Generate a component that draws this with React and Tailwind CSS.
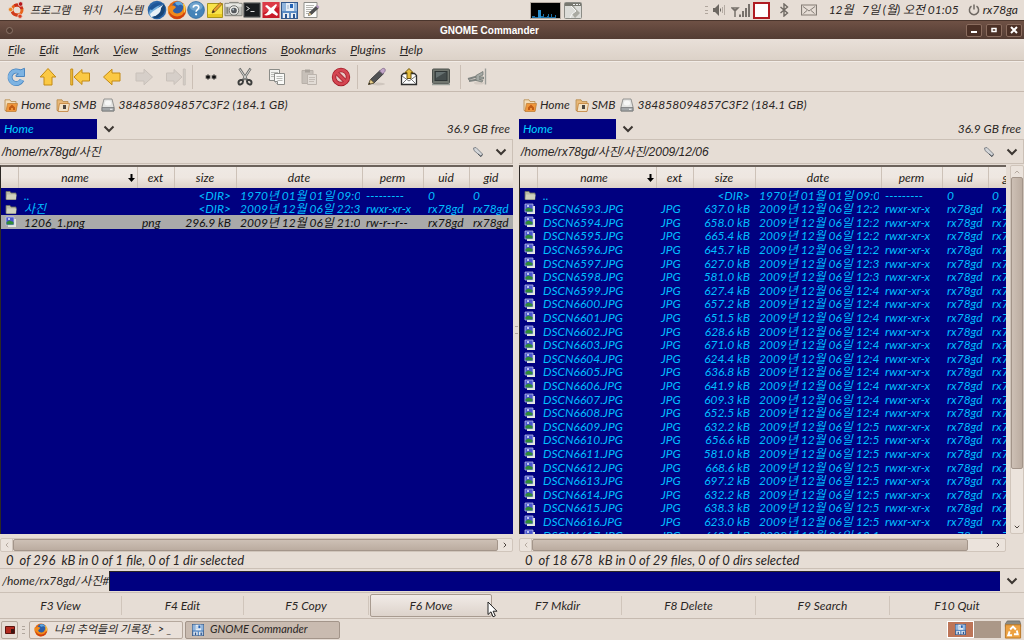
import React, { useState } from 'react';

const MENUS = ['File', 'Edit', 'Mark', 'View', 'Settings', 'Connections', 'Bookmarks', 'Plugins', 'Help'];

const LEFT_ROWS = [
  { name: '..', ext: '', size: '<DIR>', date: '1970년 01월 01일 09:00', perm: '---------', uid: '0', gid: '0', kind: 'dir' },
  { name: '사진', ext: '', size: '<DIR>', date: '2009년 12월 06일 22:38', perm: 'rwxr-xr-x', uid: 'rx78gd', gid: 'rx78gd', kind: 'dir' },
  { name: '1206_1.png', ext: 'png', size: '296.9 kB', date: '2009년 12월 06일 21:03', perm: 'rw-r--r--', uid: 'rx78gd', gid: 'rx78gd', kind: 'image', selected: true },
];

const PHOTOS = [
  ['6593', '637.0', '12:21'], ['6594', '658.0', '12:21'], ['6595', '665.4', '12:21'], ['6596', '645.7', '12:28'],
  ['6597', '627.0', '12:31'], ['6598', '581.0', '12:37'], ['6599', '627.4', '12:43'], ['6600', '657.2', '12:44'],
  ['6601', '651.5', '12:45'], ['6602', '628.6', '12:46'], ['6603', '671.0', '12:46'], ['6604', '624.4', '12:46'],
  ['6605', '636.8', '12:47'], ['6606', '641.9', '12:47'], ['6607', '609.3', '12:49'], ['6608', '652.5', '12:49'],
  ['6609', '632.2', '12:50'], ['6610', '656.6', '12:50'], ['6611', '581.0', '12:52'], ['6612', '668.6', '12:52'],
  ['6613', '697.2', '12:56'], ['6614', '632.2', '12:56'], ['6615', '638.3', '12:59'], ['6616', '623.0', '12:59'],
  ['6617', '663.1', '13:11'],
];

const RIGHT_ROWS = [
  LEFT_ROWS[0],
  ...PHOTOS.map(([no, size, time]) => ({
    name: `DSCN${no}.JPG`,
    ext: 'JPG',
    size: `${size} kB`,
    date: `2009년 12월 06일 ${time}`,
    perm: 'rwxr-xr-x',
    uid: 'rx78gd',
    gid: 'rx78gd',
    kind: 'image',
  })),
];

const ACTIONS = ['F3 View', 'F4 Edit', 'F5 Copy', 'F6 Move', 'F7 Mkdir', 'F8 Delete', 'F9 Search', 'F10 Quit'];

/* ---------- icons ---------- */

function Ubuntu() {
  return (
    <svg viewBox="0 0 18 18" className="size-[18px]">
      <circle cx="9" cy="9" r="5" fill="none" stroke="#e8641c" strokeWidth="3" />
      <path d="M13.9 8a5 5 0 0 0-7.4-3.3" fill="none" stroke="#c92d1c" strokeWidth="3" />
      <path d="M4.2 10.5a5 5 0 0 0 5.6 3.5" fill="none" stroke="#d13a1c" strokeWidth="3" />
      <circle cx="2.6" cy="8.5" r="2.2" fill="#ee8420" stroke="#e6ddd5" strokeWidth=".8" />
      <circle cx="12.6" cy="3" r="2.3" fill="#b5161c" stroke="#e6ddd5" strokeWidth=".8" />
      <circle cx="12" cy="15.2" r="2.2" fill="#dc3b1d" stroke="#e6ddd5" strokeWidth=".8" />
    </svg>
  );
}

function Thunderbird() {
  return (
    <svg viewBox="0 0 20 20" className="size-5">
      <circle cx="10" cy="10" r="9.3" fill="#2c67a8" />
      <path d="M2 13C4 5 11 1 18 4c-5 0-7 3-8 7l-4 7C3 17 2 15 2 13z" fill="#75b0de" />
      <path d="M3 14C7 10 11 8 16 5l-2 7-5 4-5 1z" fill="#e9f1f6" />
      <path d="M17 4c2 5 1 10-4 13-3 2-6 1-8 0 5-1 9-4 9-9z" fill="#174475" />
      <path d="M2 9C5 3 12 1 17 4c-5 1-9 3-12 6z" fill="#1e5698" />
    </svg>
  );
}

function Firefox({ className = 'size-[19px]' }) {
  return (
    <svg viewBox="0 0 20 20" className={className}>
      <circle cx="10" cy="10" r="9.2" fill="#e56a14" />
      <circle cx="11" cy="8" r="6.4" fill="#2d5ea7" />
      <path d="M8 2.4c4-2 8 0 8.6 4-2-2-4-2-5-1-2 0-3-1-3.6-3z" fill="#5fa6dd" />
      <path d="M1 6c1 1 2 1 3 0 2-1 4 0 5 1-1 2-3 2-3 4 1 3 6 3 8 1 2-2 3-5 2-8 4 5 3 12-3 14C6 21-.5 15 1 6z" fill="#f08a1c" />
      <path d="M2 11c2 5 8 7 13 4 2-2 3-4 3-7 2 7-3 11-8 11-5 0-8-4-8-8z" fill="#cf3f10" />
      <path d="M17 4c2 3 2 7 0 9 0-3 0-6-1-9z" fill="#fbd24a" />
    </svg>
  );
}

function HelpBubble() {
  return (
    <svg viewBox="0 0 18 18" className="size-[18px]">
      <circle cx="9" cy="9" r="8.4" fill="#4583b8" stroke="#2f6a9f" strokeWidth=".8" />
      <ellipse cx="9" cy="5.5" rx="6.5" ry="4.2" fill="#6fa3cd" />
      <path d="M6.2 6.6c.2-3.2 5.6-3.2 5.6 0 0 2-2.7 2-2.7 4.2" fill="none" stroke="#fff" strokeWidth="1.6" />
      <circle cx="9.1" cy="13.3" r="1.1" fill="#fff" />
    </svg>
  );
}

function Note() {
  return (
    <svg viewBox="0 0 18 18" className="size-[18px]">
      <path d="M1.5 2.5h15v14h-15z" fill="#f8e34a" stroke="#a8941c" />
      <path d="M2 13h14v3H2z" fill="#e9c922" />
      <path d="M6 12l1-3 7-7.5 2 1.8-7 7.5z" fill="#e89b2c" stroke="#7a5418" strokeWidth=".7" />
      <path d="M6 12l1-3 2 2z" fill="#3b2f22" />
    </svg>
  );
}

function Camera() {
  return (
    <svg viewBox="0 0 20 18" className="h-[18px] w-[19px]">
      <path d="M1 2h4l1-1h9l1 1h3v13H1z" fill="#c3c3bd" stroke="#7d7d77" />
      <path d="M1.5 2.5h17v3h-17z" fill="#e7e7e2" />
      <circle cx="10.5" cy="9.5" r="5" fill="#ecece8" stroke="#6c6c68" />
      <circle cx="10.5" cy="9.5" r="3" fill="#54575b" />
      <circle cx="9.7" cy="8.5" r="1" fill="#b4c6d2" />
      <rect x="2.5" y="6" width="2" height="7" fill="#85857f" />
    </svg>
  );
}

function Terminal() {
  return (
    <svg viewBox="0 0 18 16" className="h-4 w-[18px]">
      <rect x=".5" y=".5" width="17" height="15" rx="1" fill="#3a3c3e" stroke="#8c8c88" />
      <rect x="2" y="2" width="14" height="12" fill="#191c1f" />
      <path d="M3.5 4.5l3 2-3 2M7.5 9.5h4" fill="none" stroke="#dedede" />
    </svg>
  );
}

function RedX() {
  return (
    <svg viewBox="0 0 18 18" className="size-[18px]">
      <rect x=".5" y="1" width="17" height="16" fill="#c81a28" />
      <path d="M1 1h16v5L1 12z" fill="#dc3a46" />
      <path d="M2 14c2-1 4-3 5-5L3 5l2-1 4 3 5-4 1 1-3 5 4 4-1 2-5-3c-2 2-5 3-8 2z" fill="#fff" />
    </svg>
  );
}

function Floppy({ className = 'size-[17px]' }) {
  return (
    <svg viewBox="0 0 17 17" className={className}>
      <rect x=".5" y=".5" width="16" height="16" fill="#5b8cc4" stroke="#34588a" />
      <path d="M1 1h4v8H1zM13 1h3v8h-3z" fill="#8fb4dc" />
      <path d="M5 1h8v8H5z" fill="#e4ecf5" />
      <path d="M9 2h3v4H9z" fill="#2463b5" />
      <path d="M6 4h2M6 6h2" stroke="#9fb2c8" />
      <path d="M2 11h6v5H2zM10 11h5v5h-5z" fill="#e9edf2" />
      <path d="M4 12h2v4H4zM12 12h2v4h-2z" fill="#2b5590" />
    </svg>
  );
}

function TextEditor() {
  return (
    <svg viewBox="0 0 18 18" className="size-[18px]">
      <path d="M2 1.5h13v15H2z" fill="#fcfcfa" stroke="#8d8d88" />
      <path d="M4 4.5h8M4 6.5h7M4 8.5h6M4 10.5h4M4 12.5h3" stroke="#b5b5b0" />
      <path d="M6.5 14.5l1-3 7-6.5 2 2-7 6.5z" fill="#4e4f50" stroke="#2d2e2f" strokeWidth=".6" />
      <path d="M14 5.5l1.5-1.4 2 2L16 7.5z" fill="#b69ac0" />
      <path d="M6.5 14.5l1-3 2 2z" fill="#e3c788" />
    </svg>
  );
}

function LoadGraph() {
  return (
    <svg viewBox="0 0 31 17" className="h-[17px] w-[31px]">
      <rect x=".5" y=".5" width="30" height="16" fill="#000" stroke="#b5aaa1" />
      <path d="M2 16v-2h3v1h3V8h3v6h2v-2h1v3h3v-1h1v-2h1v3h2v-3h1v3h3v-2h1v3z" fill="#1b6ea5" />
      <path d="M8 16V8h3v8z" fill="#2b8fcd" />
    </svg>
  );
}

function BrokenWindow() {
  return (
    <svg viewBox="0 0 18 17" className="h-[17px] w-[18px]">
      <rect x=".5" y=".5" width="17" height="16" rx="1" fill="#dcdcd8" stroke="#8c8c86" />
      <path d="M1 1h16v3H1z" fill="#77776f" />
      <path d="M9 2h2v1H9zM12 2h2v1h-2zM15 2h1v1h-1z" fill="#eee" />
      <path d="M7 4l5 5-4 3 3 4 5-5-4-4-2-3z" fill="#aaaaa2" />
      <path d="M7 4l5 5-4 3-2 4" fill="none" stroke="#f6f6f4" />
    </svg>
  );
}

function Speaker() {
  return (
    <svg viewBox="0 0 14 14" className="size-[14px]" fill="#6d6862">
      <path d="M1 5h2l4-4v12L3 9H1z" />
      <path d="M10.5 4v6M12.5 2v10" stroke="#b4aba3" />
      <path d="M8.5 5.5v3" stroke="#6d6862" />
    </svg>
  );
}

function Signal() {
  return (
    <svg viewBox="0 0 20 16" className="h-4 w-5" stroke="#77716b">
      <path d="M1 6h6L4 9zM4 7v8" fill="none" strokeWidth="1.5" />
      <path d="M9 12.5v2.5M12 9v6M15 6v9M18 2v13" strokeWidth="2" />
    </svg>
  );
}

function Bluetooth() {
  return (
    <svg viewBox="0 0 10 14" className="h-[14px] w-[10px]" fill="none" stroke="#6f6963" strokeWidth="1.4">
      <path d="M1.5 4l7 6L5 13V1l3.5 3-7 6" />
    </svg>
  );
}

function Envelope() {
  return (
    <svg viewBox="0 0 16 12" className="h-3 w-4" fill="none" stroke="#837c75">
      <path d="M.5 1h15v10H.5z" strokeWidth="1.2" />
      <path d="M2 2.5l6 4.5 6-4.5M2.5 9.5l3.5-3M13.5 9.5L10 6.5" />
    </svg>
  );
}

function Power() {
  return (
    <svg viewBox="0 0 12 12" className="size-3" fill="none" stroke="#6f6963" strokeWidth="1.5">
      <path d="M3.5 2.2a4.6 4.6 0 1 0 5 0M6 .5v5" />
    </svg>
  );
}

function Refresh() {
  return (
    <svg viewBox="0 0 20 20" className="size-5">
      <path d="M14.5 5.5A6.3 6.3 0 1 0 16 13" fill="none" stroke="#4a86c0" strokeWidth="5" />
      <path d="M10 9.5V8l2.5-1-2-2.5 8-3.2v8.2z" fill="#7db3e2" stroke="#4a86c0" />
      <path d="M14.3 5.5A6.3 6.3 0 1 0 15.8 13" fill="none" stroke="#7db3e2" strokeWidth="3.6" />
    </svg>
  );
}

/* block arrow used by all of the navigation buttons */
function BlockArrow({ turn = '', bar = false, off = false }) {
  return (
    <svg viewBox="0 0 20 20" className={`size-5 ${turn}`}>
      <g fill={off ? '#d6cfc9' : '#fbc944'} stroke={off ? '#c9c1ba' : '#c48a12'} strokeLinejoin="round">
        <path d={bar ? 'M4 10l8-7.5V6h7.5v8H12v3.5z' : 'M1.5 10L10 2.2V6h8v8h-8v3.8z'} />
        {bar && <path d="M.8 2h1.9v16H.8z" />}
      </g>
    </svg>
  );
}

function Scissors() {
  return (
    <svg viewBox="0 0 20 20" className="size-5">
      <path d="M4.5 1.5L12 13M15.5 1.5L8 13" stroke="#6b6c6a" strokeWidth="2.4" />
      <path d="M4.8 2.2L11 11.5M15.2 2.2L9 11.5" stroke="#e5e6e3" strokeWidth=".9" />
      <path d="M3.5 15.5c0-3 4.5-3.5 4.5-1s-4.5 5-4.5 1zM16.5 15.5c0-3-4.5-3.5-4.5-1s4.5 5 4.5 1z" fill="none" stroke="#3c3d3c" strokeWidth="2" />
    </svg>
  );
}

function CopyIcon() {
  return (
    <svg viewBox="0 0 18 18" className="size-[18px]">
      <path d="M1.5 1.5h10v11h-10z" fill="#f2f2ef" stroke="#8b8c88" />
      <path d="M3 4.5h7M3 6.5h7M3 8.5h3" stroke="#b9bab6" />
      <path d="M6.5 5.5h10v11h-7l-3-3z" fill="#fafaf8" stroke="#8b8c88" />
      <path d="M8.5 8.5h6M8.5 10.5h6M9.5 12.5h5" stroke="#b9bab6" />
      <path d="M6.5 13.5h3v3" fill="#ddd" stroke="#8b8c88" />
    </svg>
  );
}

function PasteIcon() {
  return (
    <svg viewBox="0 0 18 18" className="size-[18px]">
      <path d="M2 2.5h11v13H2z" fill="#c7c0b9" stroke="#b8b0a9" />
      <path d="M5 1.5h5v3H5z" fill="#a9a29b" />
      <path d="M7.5 6.5h9v10h-9z" fill="#e2dcd6" stroke="#bcb4ad" />
      <path d="M9 9.5h6M9 11.5h6M9 13.5h5" stroke="#c4bcb5" />
    </svg>
  );
}

function Forbidden() {
  return (
    <svg viewBox="0 0 20 20" className="size-5">
      <circle cx="10" cy="10" r="7" fill="#e9c9c6" stroke="#a11c28" strokeWidth="4.4" />
      <path d="M5 5l10 10" stroke="#a11c28" strokeWidth="4.4" />
      <circle cx="10" cy="10" r="7" fill="none" stroke="#d44652" strokeWidth="2.8" />
      <path d="M5 5l10 10" stroke="#d44652" strokeWidth="2.8" />
    </svg>
  );
}

function Pencil() {
  return (
    <svg viewBox="0 0 20 20" className="size-5">
      <ellipse cx="11" cy="17" rx="7" ry="1.5" fill="#cfc6be" />
      <path d="M1.5 17.5l2-5 9.5-9 3.5 3.2-9.5 9.3z" fill="#515254" stroke="#2e2f30" strokeWidth=".8" />
      <path d="M12.5 4l3-2.5c2-.8 3.5.9 2.5 2.8L15.7 7z" fill="#c2a5c8" stroke="#7d6486" strokeWidth=".7" />
      <path d="M1.5 17.5l2-5 3.5 3.3z" fill="#e8ce8c" stroke="#6f5b2c" strokeWidth=".6" />
      <path d="M1.5 17.5l.8-2 1.3 1.2z" fill="#222" />
    </svg>
  );
}

function SendMail() {
  return (
    <svg viewBox="0 0 20 20" className="size-5">
      <path d="M2.5 8.5l2-2h11l2 2v9h-15z" fill="#fdfdfd" stroke="#2e2e2e" strokeWidth="1.3" />
      <path d="M3 17l5-5M17 17l-5-5M3 9l7 5 7-5" fill="none" stroke="#777" />
      <path d="M10 1.5l4 4h-2v6H8v-6H6z" fill="#e4bd3d" stroke="#6d5410" />
    </svg>
  );
}

function Monitor() {
  return (
    <svg viewBox="0 0 20 18" className="h-[18px] w-5">
      <rect x="1.5" y="1" width="17" height="14.5" rx="1" fill="#71766f" stroke="#4c504c" />
      <rect x="4" y="3.5" width="12" height="9" fill="#444c4c" stroke="#303636" />
      <path d="M5 4h10L5 10z" fill="#657070" />
      <path d="M1 16.5h18" stroke="#9a9f98" strokeWidth="1.5" />
    </svg>
  );
}

function Unplug() {
  return (
    <svg viewBox="0 0 20 20" className="size-5">
      <ellipse cx="12" cy="16" rx="5" ry="1.5" fill="#d5ccc4" />
      <path d="M1 12l9-2.5M2 14l9-1.5" stroke="#7f8380" strokeWidth="2" />
      <path d="M9 8.5l7-4v3.5l-4 2h4.5v2H12l4 1.5-1 1.5-6-1.5z" fill="#a4a8a4" stroke="#747874" strokeWidth=".8" />
      <path d="M18.5 1.5v16" stroke="#9a9c98" strokeWidth="1.4" />
    </svg>
  );
}

function PlaceFolder({ remote = false }) {
  return (
    <svg viewBox="0 0 14 13" className="h-[13px] w-[14px]">
      <path d="M1 .8h5l1 1.7h5v9H1z" fill={remote ? '#e8b878' : '#f3ddb9'} stroke="#b58a4c" strokeWidth=".8" />
      <path d="M3.5 4.5h10l-1.5 8H2z" fill={remote ? '#f2e2c6' : '#f0973c'} stroke="#c08038" strokeWidth=".8" />
      <path d={remote ? 'M7 6h3v4H7z' : 'M5 8.5L8 5.5l3 3v2.5H9V9H7v2H5z'} fill={remote ? '#4a4540' : '#c25c14'} />
    </svg>
  );
}

function Drive() {
  return (
    <svg viewBox="0 0 14 14" className="size-[14px]">
      <path d="M3 1h8l2 8v4H1V9z" fill="#e4e4e2" stroke="#8a8a88" strokeWidth=".9" />
      <path d="M1 9.5h12V13H1z" fill="#a3a6a8" stroke="#77797a" strokeWidth=".8" />
      <ellipse cx="7" cy="5" rx="3.2" ry="2.5" fill="#f7f7f6" />
      <path d="M9 11.3h2.5" stroke="#efefef" />
    </svg>
  );
}

function RowIcon({ kind }) {
  if (kind === 'dir') {
    return (
      <svg viewBox="0 0 12 12" className="ml-1 size-3">
        <path d="M1 2.5h4l1 1.5h5v6.5H1z" fill="#b9bba6" stroke="#6f7160" strokeWidth=".8" />
        <path d="M2 5.5h9.5l-.7 5H1.5z" fill="#d0d1bd" />
      </svg>
    );
  }
  return (
    <svg viewBox="0 0 12 12" className="ml-1 size-3">
      <path d="M3 3h8v8H3z" fill="#e4e8de" />
      <path d="M1 1h8v8H1z" fill="#4a55d0" stroke="#c9cdec" strokeWidth=".7" />
      <path d="M1.5 6l3-1.5L8.500 6v2.500h-7z" fill="#2f8a36" />
      <circle cx="4" cy="3" r="1" fill="#e4e8ff" />
    </svg>
  );
}

function Chevron({ className = 'h-2 w-3', turn = '' }) {
  return (
    <svg viewBox="0 0 12 8" className={`${className} ${turn}`} fill="none" stroke="currentColor" strokeWidth="2">
      <path d="M1.5 1.5L6 6l4.5-4.5" />
    </svg>
  );
}

function Tag() {
  return (
    <svg viewBox="0 0 12 12" className="size-3">
      <path d="M1.5 2l2.5-.5 6.5 6.5-1.5 2.5L2 4.5z" fill="#d3d5d8" stroke="#777c82" strokeWidth=".9" />
      <path d="M6 8l3 2.5 1.5-2" fill="none" stroke="#4d5157" />
    </svg>
  );
}

function Trash() {
  return (
    <svg viewBox="0 0 18 20" className="h-[19px] w-[18px]">
      <path d="M1 4l2-3h13l1 3v3H1z" fill="#8b8a83" stroke="#6a6962" strokeWidth=".8" />
      <path d="M1 5h16v14H1z" fill="#eda242" stroke="#b87625" />
      <path d="M6 10l3-3 3 3M13 11l1 4h-4M8 16H4l1.5-4" fill="none" stroke="#fff" strokeWidth="2" />
    </svg>
  );
}

function Pointer() {
  return (
    <svg viewBox="0 0 11 17" className="absolute -right-1 top-2 z-10 h-[17px] w-[11px]">
      <path d="M1 1v12.5l3-2.7 2 5 2.3-1-2.2-4.6H10z" fill="#fff" stroke="#222" />
    </svg>
  );
}

/* ---------- panels ---------- */

function TopPanel() {
  return (
    <header className="flex h-5 shrink-0 items-center bg-[#e6ddd5] pr-[6px] pl-2">
      <Ubuntu />
      <nav className="ml-1 flex items-center gap-[11px] text-[11px]">
        <button>프로그램</button>
        <button>위치</button>
        <button>시스템</button>
      </nav>
      <div className="ml-1 flex items-center">
        <button aria-label="Mail client"><Thunderbird /></button>
        <button aria-label="Web browser"><Firefox className="size-5" /></button>
        <button aria-label="Help"><HelpBubble /></button>
        <button aria-label="Notes" className="ml-px"><Note /></button>
        <button aria-label="Screenshot"><Camera /></button>
        <button aria-label="Terminal"><Terminal /></button>
        <button aria-label="Close applet" className="ml-px"><RedX /></button>
        <button aria-label="File manager" className="ml-px"><Floppy /></button>
        <button aria-label="Text editor" className="ml-1"><TextEditor /></button>
      </div>
      <div className="ml-auto flex items-center gap-[3px]">
        <LoadGraph />
        <BrokenWindow />
      </div>
      <div className="ml-[123px] flex items-center">
        <Grip />
        <div className="ml-1 flex items-center gap-[5px]">
          <Speaker />
          <Signal />
        </div>
        <span className="ml-[2px] size-[17px] border-2 border-[#b01c22] bg-white" />
        <div className="mr-3 ml-[9px] flex items-center gap-3">
          <Bluetooth />
          <Envelope />
        </div>
        <time className="w-[130px] whitespace-pre text-[12px]">12월   7일 (월) 오전 01:05</time>
        <button className="ml-[9px] flex items-center gap-[3px] text-[12px]">
          <Power />
          rx78ga
        </button>
      </div>
    </header>
  );
}

function Grip() {
  return (
    <span className="flex h-2 w-[3px] flex-col justify-between">
      <i className="h-px bg-[#b0a69d]" />
      <i className="h-px bg-[#b0a69d]" />
      <i className="h-px bg-[#b0a69d]" />
    </span>
  );
}

function TitleBar() {
  const btn = 'flex h-[13px] w-4 items-center justify-center rounded-xs border border-[#8a6c5e] bg-[#4b3026] text-white';
  return (
    <div className="flex h-[19px] shrink-0 items-center border-t border-[#4a352c] bg-linear-to-b from-[#6f5145] to-[#533c33] pr-[2px] pl-[6px]">
      <span className="size-[7px] rounded-full border border-[#8c7468] bg-[#503a30]" />
      <h1 className="flex-1 text-center font-['Liberation_Sans',sans-serif] text-[10px] font-bold text-white not-italic">GNOME Commander</h1>
      <div className="flex justify-end gap-1">
        <button aria-label="Minimize" className={btn}><svg viewBox="0 0 8 8" className="size-2"><path d="M1 6h6" stroke="#fff" strokeWidth="2" /></svg></button>
        <button aria-label="Maximize" className={btn}><svg viewBox="0 0 8 8" className="size-2"><path d="M2 2.5h4v3H2z" fill="none" stroke="#fff" strokeWidth="1.5" /></svg></button>
        <button aria-label="Close" className={btn}><svg viewBox="0 0 8 8" className="size-2"><path d="M1 1l6 6M7 1L1 7" stroke="#fff" strokeWidth="2" /></svg></button>
      </div>
    </div>
  );
}

function MenuBar() {
  return (
    <nav className="flex h-[22px] shrink-0 items-center gap-[14px] border-b border-[#bfb2a7] bg-linear-to-b from-[#e9e0d9] to-[#dcd2c8] px-2 text-[12px]">
      {MENUS.map((menu) => (
        <button key={menu}>
          <u>{menu[0]}</u>
          {menu.slice(1)}
        </button>
      ))}
    </nav>
  );
}

function ToolBar() {
  const btn = 'flex h-7 w-8 items-center justify-center';
  const sep = 'h-6 w-px bg-[#cbbfb5]';
  return (
    <div className="flex h-[31px] shrink-0 items-center border-t border-b border-t-[#f2ece7] border-b-[#c6bab0]">
      <button aria-label="Refresh" className={btn}><Refresh /></button>
      <button aria-label="Up one directory" className={btn}><BlockArrow turn="rotate-90" /></button>
      <button aria-label="First" className={btn}><BlockArrow bar /></button>
      <button aria-label="Back" className={btn}><BlockArrow /></button>
      <button aria-label="Forward" className={btn} disabled><BlockArrow turn="rotate-180" off /></button>
      <button aria-label="Latest" className={btn} disabled><BlockArrow turn="rotate-180" bar off /></button>
      <span className={sep} />
      <button aria-label="Select by pattern" className="flex h-7 w-9 items-center justify-center">
        <svg viewBox="0 0 12 6" className="h-[6px] w-3" stroke="#111" strokeWidth="1.3">
          <path d="M3 .5v5M.7 1.7l4.6 2.6M5.3 1.7L.7 4.3M9 .5v5M6.7 1.7l4.6 2.6M11.3 1.7L6.7 4.3" />
        </svg>
      </button>
      <button aria-label="Cut" className={btn}><Scissors /></button>
      <button aria-label="Copy" className={btn}><CopyIcon /></button>
      <button aria-label="Paste" className={btn} disabled><PasteIcon /></button>
      <button aria-label="Delete" className={btn}><Forbidden /></button>
      <span className={sep} />
      <button aria-label="Edit" className={`${btn} ml-[3px]`}><Pencil /></button>
      <button aria-label="Send files" className={btn}><SendMail /></button>
      <button aria-label="Terminal" className={btn}><Monitor /></button>
      <span className={`${sep} ml-[3px]`} />
      <button aria-label="Disconnect" className={btn}><Unplug /></button>
    </div>
  );
}

const TH = 'border-r border-[#cdc2b8] p-0 text-center font-normal';
const TD = 'overflow-hidden p-0 whitespace-nowrap';

function FileTable({ rows }) {
  return (
    <div className="min-h-0 flex-1 overflow-hidden border-t-2 border-l border-t-[#6b625b] border-l-[#2b2724] bg-[#000080]">
      <table className="w-[512px] table-fixed border-collapse text-[12px] leading-[13px]">
        <colgroup>
          <col className="w-[17px]" />
          <col className="w-[119px]" />
          <col className="w-[37px]" />
          <col className="w-[62px]" />
          <col className="w-[126px]" />
          <col className="w-[61px]" />
          <col className="w-[46px]" />
          <col className="w-[44px]" />
        </colgroup>
        <thead>
          <tr className="h-[21px] bg-linear-to-b from-[#efe9e4] via-[#eee7e1] to-[#ddd2c9] text-[#1d1a18]">
            <th className={TH} aria-label="type" />
            <th className={TH}>
              <span className="flex items-center">
                <span className="flex-1 pl-1">name</span>
                <svg viewBox="0 0 7 8" className="mr-[2px] h-2 w-[7px]"><path d="M2.5 0h2v4H7L3.5 8 0 4h2.5z" fill="#000" /></svg>
              </span>
            </th>
            <th className={TH}>ext</th>
            <th className={TH}>size</th>
            <th className={TH}>date</th>
            <th className={TH}>perm</th>
            <th className={TH}>uid</th>
            <th className={TH}>gid</th>
          </tr>
        </thead>
        <tbody>
          {rows.map((row) => (
            <tr
              key={row.name}
              className={`h-[14px] nth-[5n+2]:h-[13px] nth-[5n+4]:h-[13px] ${row.selected ? 'bg-[#aaaaaa] text-[#111]' : 'text-[#00bfff]'}`}
            >
              <td className={TD}><RowIcon kind={row.kind} /></td>
              <td className={`${TD} pl-[6px]`}>{row.name}</td>
              <td className={`${TD} pl-[5px]`}>{row.ext}</td>
              <td className={`${TD} pr-[5px] text-right`}>{row.size}</td>
              <td className={TD}><div className="ml-1 w-[120px] overflow-hidden">{row.date}</div></td>
              <td className={`${TD} pl-1`}>{row.perm}</td>
              <td className={`${TD} pl-[5px]`}>{row.uid}</td>
              <td className={`${TD} pl-1`}>{row.gid}</td>
            </tr>
          ))}
        </tbody>
      </table>
    </div>
  );
}

function HScroll({ thumb }) {
  return (
    <div className="mt-1 flex h-[14px] shrink-0 rounded-xs border border-[#d0c5bb] bg-[#ebe3dc]">
      <button aria-label="Scroll left" className="flex w-3 items-center justify-center border-r border-[#d0c5bb] text-[#b5aaa0]">
        <Chevron className="h-1 w-[6px]" turn="rotate-90" />
      </button>
      <div className="flex-1">
        <div className={`h-full rounded-xs border border-[#a3958a] bg-linear-to-b from-[#cdc0b5] to-[#bbaca0] ${thumb}`} />
      </div>
      <button aria-label="Scroll right" className="flex w-[14px] items-center justify-center text-[#4c443e]">
        <Chevron className="h-1 w-[6px]" turn="-rotate-90" />
      </button>
    </div>
  );
}

function VScroll() {
  return (
    <div className="ml-1 flex w-[14px] shrink-0 flex-col rounded-xs border border-[#d0c5bb] bg-[#ebe3dc]">
      <button aria-label="Scroll up" className="flex h-[11px] items-center justify-center text-[#b5aaa0]">
        <Chevron className="h-1 w-[6px]" turn="rotate-180" />
      </button>
      <div className="flex-1">
        <div className="h-[85%] rounded-xs border border-[#a3958a] bg-linear-to-r from-[#cdc0b5] to-[#bbaca0]" />
      </div>
      <button aria-label="Scroll down" className="flex h-[13px] items-center justify-center text-[#4c443e]">
        <Chevron className="h-1 w-[6px]" />
      </button>
    </div>
  );
}

function Pane({ path, rows, status, vertical = false, thumb }) {
  return (
    <section className="flex min-w-0 flex-col">
      <div className="flex h-[26px] shrink-0 items-center gap-[5px] pl-1 text-[12px]">
        <button className="flex items-center gap-[3px]"><PlaceFolder />Home</button>
        <button className="flex items-center gap-[3px]"><PlaceFolder remote />SMB</button>
        <button className="flex items-center gap-[3px]"><Drive />384858094857C3F2 (184.1 GB)</button>
      </div>
      <div className="flex h-[21px] shrink-0 items-center text-[12px]">
        <div className="relative flex items-center">
          <select
            aria-label="Connection"
            className="h-5 w-[120px] appearance-none bg-linear-to-r from-[#000080] from-[97px] to-transparent to-[97px] pl-1 text-[#00d0ff]"
          >
            <option>Home</option>
            <option>SMB</option>
          </select>
          <span className="pointer-events-none absolute right-[5px] text-[#3c3632]"><Chevron /></span>
        </div>
        <span className="ml-auto pr-[3px]">36.9 GB free</span>
      </div>
      <div className="mb-[1px] flex h-[25px] shrink-0 items-center border border-l-0 border-[#cbc0b6] pl-[2px]">
        <span className="flex-1 font-['Liberation_Sans','Noto_Sans_CJK_KR',sans-serif] text-[12px]">{path}</span>
        <button aria-label="Bookmarks"><Tag /></button>
        <button aria-label="History" className="mr-[5px] ml-[11px] text-[#3c3632]"><Chevron /></button>
      </div>
      <div className="flex min-h-0 flex-1">
        <div className="flex min-w-0 flex-1 flex-col">
          <FileTable rows={rows} />
        </div>
        {vertical && <VScroll />}
      </div>
      <div className={vertical ? 'pr-[18px]' : ''}>
        <HScroll thumb={thumb} />
      </div>
      <p className="h-4 shrink-0 pl-[6px] text-[13px] leading-4 whitespace-pre">{status}</p>
    </section>
  );
}

function CommandLine() {
  const [command, setCommand] = useState('');
  return (
    <div className="flex h-[25px] shrink-0 items-center border-t border-b border-[#cbc0b6] pl-[2px] text-[12px]">
      <label htmlFor="command" className="min-w-[106px]">/home/rx78gd/사진#</label>
      <input
        id="command"
        value={command}
        onChange={(e) => setCommand(e.target.value)}
        className="h-5 min-w-0 flex-1 border-t border-l border-[#2b2724] bg-[#000080] px-1 text-[#00d0ff] outline-none"
      />
      <button aria-label="Command history" className="mr-[6px] ml-[6px] text-[#3c3632]"><Chevron /></button>
    </div>
  );
}

function ActionBar() {
  return (
    <div className="grid h-[26px] shrink-0 grid-cols-[122fr_122fr_125fr_125fr_128fr_134fr_134fr_134fr] border-b border-[#c6bab0] text-[12px]">
      {ACTIONS.map((action) => {
        const active = action === 'F6 Move';
        return (
          <div key={action} className="group relative flex">
            <button
              className={
                active
                  ? 'my-px mr-[2px] ml-px flex-1 rounded-xs border border-[#a89b90] bg-linear-to-b from-[#f1ebe7] to-[#ddd3cb]'
                  : 'my-[3px] flex-1 border-r border-[#d0c5bb] group-last:border-r-0'
              }
            >
              {action}
            </button>
            {active && <Pointer />}
          </div>
        );
      })}
    </div>
  );
}

function TaskBar() {
  return (
    <footer className="flex h-[21px] shrink-0 items-center pr-[2px] pl-[1px] text-[11px]">
      <button aria-label="Show desktop" className="flex h-[18px] w-[17px] items-center justify-center rounded-xs border border-[#b5a89d]">
        <svg viewBox="0 0 10 8" className="h-2 w-[10px]"><path d="M.5.5h9v7h-9z" fill="#b32a20" stroke="#5b1510" /><path d="M6 3h3v4H6z" fill="#3b1512" /></svg>
      </button>
      <span className="mx-1"><Grip /></span>
      <button className="flex h-[18px] w-[154px] items-center gap-[6px] overflow-hidden rounded-xs border border-[#b5a89d] bg-[#e9e0d9] pl-1 whitespace-nowrap">
        <Firefox className="size-[14px] shrink-0" />
        나의 추억들의 기록장_ &gt; _
      </button>
      <button className="ml-[2px] flex h-[18px] w-[155px] items-center gap-[6px] rounded-xs border border-[#a3958a] bg-[#c9bbb0] pl-[6px]">
        <Floppy className="size-3" />
        GNOME Commander
      </button>
      <div className="ml-auto flex h-[17px] w-[54px]">
        <button aria-label="Workspace 1" className="flex w-[27px] items-center justify-center border border-white bg-[#bd7558]"><Floppy className="size-[11px]" /></button>
        <button aria-label="Workspace 2" className="flex-1 bg-[#ab9888]" />
      </div>
      <button aria-label="Trash" className="ml-[3px]"><Trash /></button>
    </footer>
  );
}

function App() {
  return (
    <div className="flex h-screen flex-col overflow-hidden bg-[#e6ddd5] font-[Lato,'Noto_Sans_CJK_KR',sans-serif] text-[#2a2624] italic">
      <TopPanel />
      <TitleBar />
      <MenuBar />
      <ToolBar />
      <main className="grid min-h-0 flex-1 grid-cols-[513fr_6px_505fr] grid-rows-[minmax(0,1fr)]">
        <Pane
          path="/home/rx78gd/사진"
          rows={LEFT_ROWS}
          status="0  of 296  kB in 0 of 1 file, 0 of 1 dir selected"
          thumb="w-full"
        />
        <div className="flex items-center justify-center">
          <span className="h-2 w-[3px] border-y border-[#b0a69d]" />
        </div>
        <Pane
          path="/home/rx78gd/사진/사진/2009/12/06"
          rows={RIGHT_ROWS}
          status="0  of 18 678  kB in 0 of 29 files, 0 of 0 dirs selected"
          thumb="w-[95%]"
          vertical
        />
      </main>
      <CommandLine />
      <ActionBar />
      <TaskBar />
    </div>
  );
}

export default App;
